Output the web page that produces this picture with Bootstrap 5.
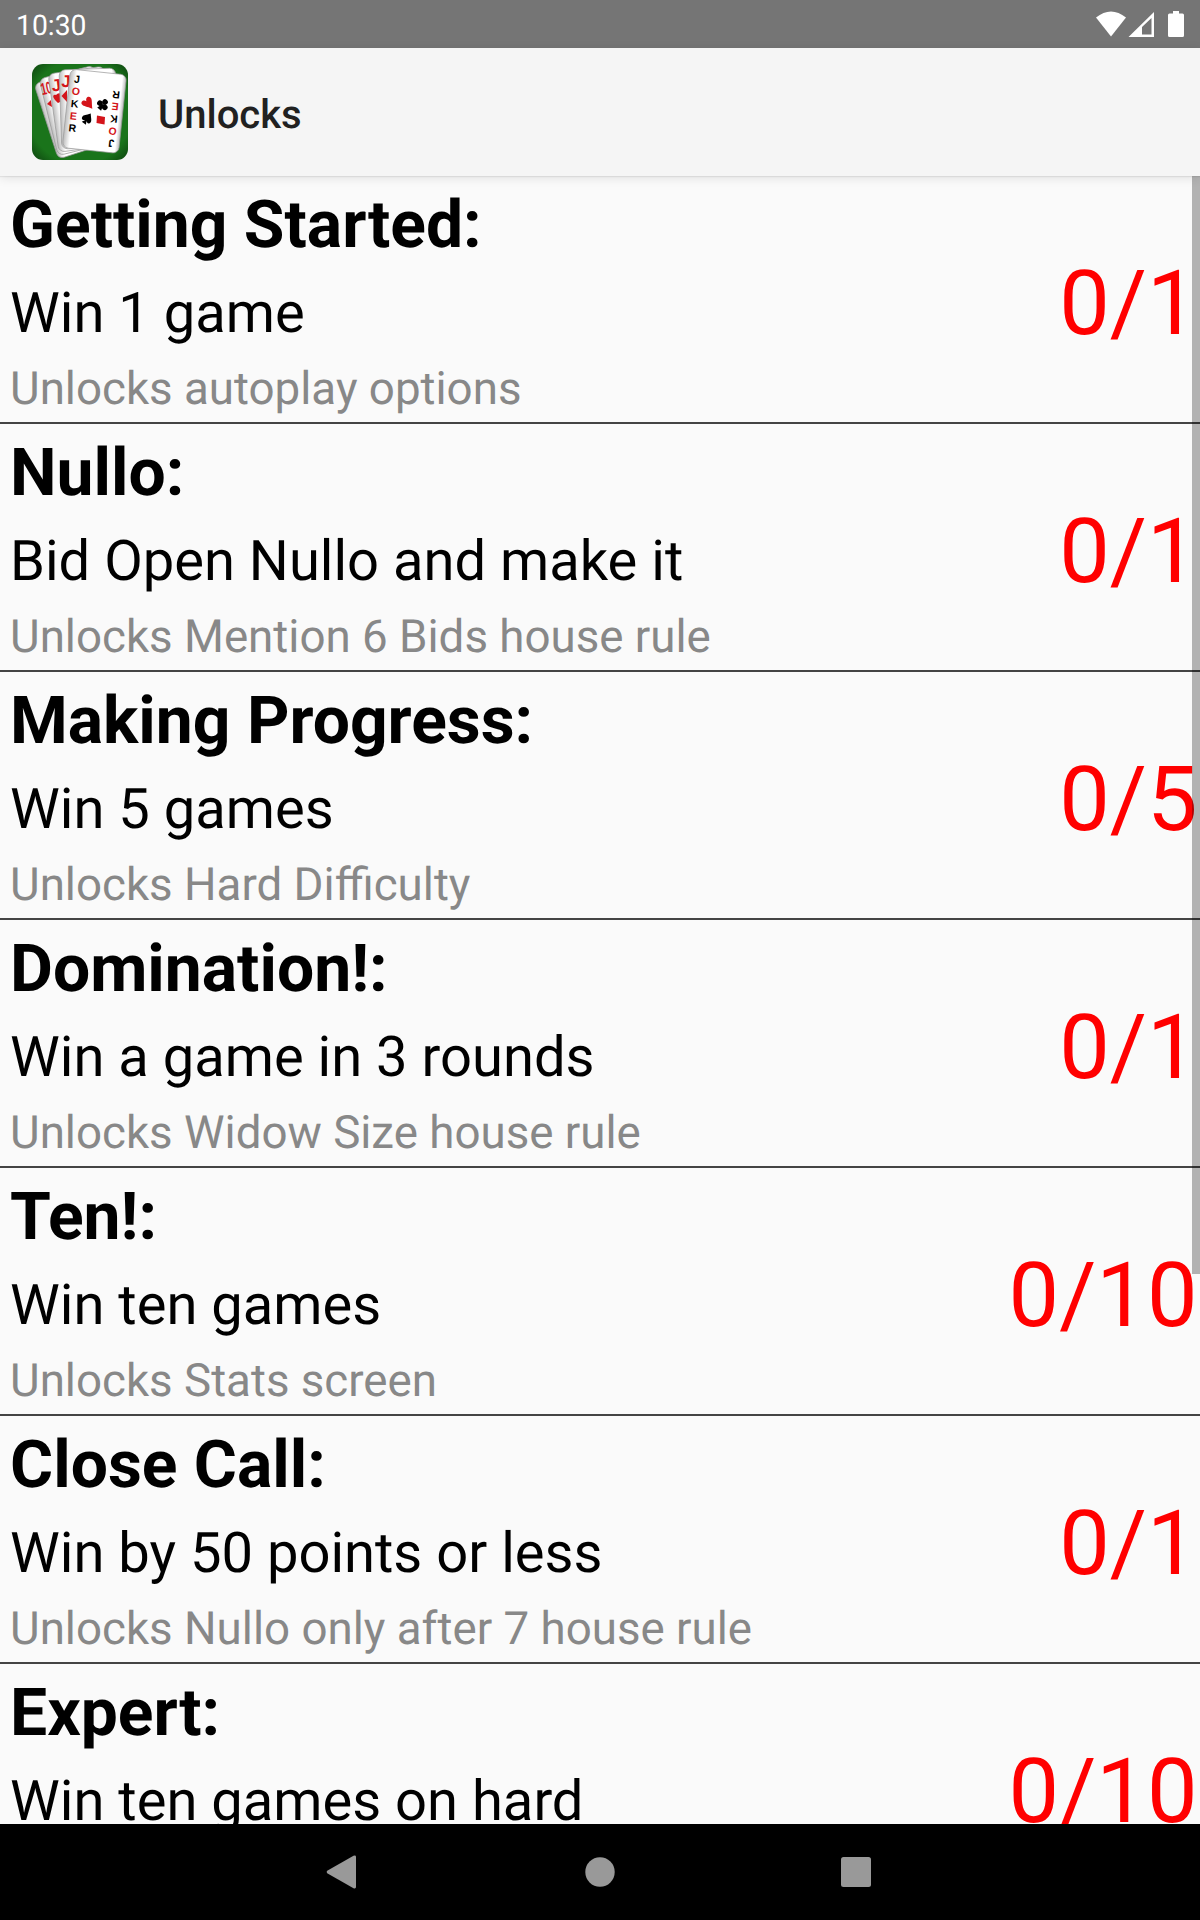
<!DOCTYPE html>
<html lang="en">
<head>
<meta charset="utf-8">
<title>Unlocks</title>
<link rel="stylesheet" href="https://cdn.jsdelivr.net/npm/bootstrap@5.3.0/dist/css/bootstrap.min.css">
<style>
body{font-family:Roboto,"Noto Sans",sans-serif;background:#fafafa;color:#000;text-rendering:geometricPrecision}
.screen{width:1200px;height:1920px}
.status-bar{height:48px;background:#757575;color:#fff;font-size:28.3px;line-height:48px;padding:2px 14px 0 16px}
.app-bar{height:128px;background:#f5f5f5;padding:0 32px;z-index:2;box-shadow:0 1px 1px rgba(0,0,0,.07),0 2px 10px rgba(0,0,0,.1)}
.app-title{font-size:40px;font-weight:500;line-height:48px;color:#212121;margin-left:30px;padding-top:5px}
.unlock-item{height:248px;flex:none;border-bottom:2px solid #444;padding:2px 2.5px 0 10px}
.unlock-name{font-size:66px;line-height:96px;font-weight:700}
.unlock-goal{font-size:56.1px;line-height:78px}
.unlock-reward{font-size:45.7px;line-height:72px;color:#888;padding-top:2px;margin-bottom:-4px}
.unlock-count{font-size:90px;line-height:106px;color:#f00;padding-top:73px}
.scroll-thumb{top:0;right:0;width:8px;height:1098px;background:rgba(0,0,0,.286)}
.nav-keys{height:96px;background:#000;z-index:2}
.nav-key{width:256px}
</style>
<script src="https://cdn.jsdelivr.net/npm/bootstrap@5.3.0/dist/js/bootstrap.bundle.min.js"></script>
</head>
<body>
<div class="screen d-flex flex-column overflow-hidden">
  <header class="status-bar d-flex justify-content-between flex-shrink-0">
    <span>10:30</span>
    <svg width="92" height="44" viewBox="1094 2 92 44" fill="#fff">
      <path d="M1096 17.500Q1111 5.500 1126 17.500L1111 36.500Z"/>
      <path fill-rule="evenodd" d="M1154 12V37H1128.500ZM1151.500 18L1142 27V34.500H1151.500Z"/>
      <path d="M1173 11h6v2.500h3.500q1.500 0 1.500 1.500v20.500q0 1.500-1.500 1.500h-13q-1.500 0-1.500-1.500V15q0-1.500 1.500-1.500h3.500z"/>
    </svg>
  </header>
  <div class="app-bar d-flex align-items-center flex-shrink-0 position-relative">
    <svg width="96" height="96" viewBox="0 0 96 96" font-family="Liberation Sans, sans-serif" font-weight="700" font-size="10.5" text-anchor="middle">
      <defs>
        <radialGradient id="felt" cx=".5" cy=".5" r=".72"><stop offset=".75" stop-color="#1a741b"/><stop offset="1" stop-color="#0c3f0e"/></radialGradient>
        <linearGradient id="edge"><stop offset="0" stop-color="#bbb"/><stop offset=".12" stop-color="#fff"/><stop offset=".93" stop-color="#fff"/><stop offset="1" stop-color="#bbb"/></linearGradient>
        <rect id="pc" width="56.500" height="79" rx="6" fill="url(#edge)" stroke="#999" stroke-width=".7"/>
      </defs>
      <rect width="96" height="96" rx="11" fill="url(#felt)"/>
      <use href="#pc" transform="translate(2 20) rotate(-18)"/>
      <use href="#pc" transform="translate(7 15) rotate(-14)"/>
      <text transform="translate(15.500 30) rotate(-13)" fill="#d4141a" font-size="17" textLength="11" lengthAdjust="spacingAndGlyphs">10</text>
      <path d="M15 40l4-4 1 7z" fill="#d4141a"/>
      <use href="#pc" transform="translate(16 10) rotate(-8)"/>
      <text transform="translate(25 27) rotate(-7)" fill="#d4141a" font-size="17">J</text>
      <path d="M26 39C20 34 20 30 24 31Q26 28 30 30V37Z" fill="#d4141a"/>
      <use href="#pc" transform="translate(27 6) rotate(-2)"/>
      <text transform="translate(34 23)" fill="#d4141a" font-size="17">J</text>
      <path d="M29.500 32L35 26V38Z" fill="#d4141a"/>
      <use href="#pc" transform="translate(38.500 5) rotate(6)"/>
      <g id="joker">
        <text transform="translate(44.700 18.800) rotate(6)">J</text>
        <text transform="translate(43.500 31) rotate(6)" fill="#d4141a">O</text>
        <text transform="translate(42.300 43.300) rotate(6)">K</text>
        <text transform="translate(41 55.600) rotate(6)" fill="#d4141a">E</text>
        <text transform="translate(40 67.600) rotate(6)">R</text>
      </g>
      <use href="#joker" transform="rotate(180 62.200 47.300)"/>
      <path transform="translate(56 39.200) rotate(-38)" fill="#d4141a" d="M0 7C-3 2-5.500 0-5.500-2.500C-5.500-6-1-6 0-2.500C1-6 5.500-6 5.500-2.500C5.500 0 3 2 0 7Z"/>
      <g transform="translate(71 40.500) rotate(40)"><circle cy="-3.200" r="2.800"/><circle cx="-3.200" cy="1" r="2.800"/><circle cx="3.200" cy="1" r="2.800"/><path d="M0-2L2.500 6H-2.500Z"/></g>
      <g transform="translate(55.300 54.300) rotate(35)"><path d="M0-6C3-2 5-1 5 1.500C5 4 2 4.500 .8 2.500L2.500 6H-2.500L-.8 2.500C-2 4.500-5 4-5 1.500C-5-1-3-2 0-6Z"/></g>
      <path d="M65 51.500L73 53L72.500 60.500L64.500 59Z" fill="#d4141a"/>
    </svg>
    <span class="app-title">Unlocks</span>
  </div>
  <main class="flex-grow-1 d-flex flex-column overflow-hidden position-relative">
    <section class="unlock-item d-flex justify-content-between align-items-start"><div><div class="unlock-name">Getting Started:</div><div class="unlock-goal">Win 1 game</div><div class="unlock-reward">Unlocks autoplay options</div></div><div class="unlock-count">0/1</div></section>
    <section class="unlock-item d-flex justify-content-between align-items-start"><div><div class="unlock-name">Nullo:</div><div class="unlock-goal">Bid Open Nullo and make it</div><div class="unlock-reward">Unlocks Mention 6 Bids house rule</div></div><div class="unlock-count">0/1</div></section>
    <section class="unlock-item d-flex justify-content-between align-items-start"><div><div class="unlock-name">Making Progress:</div><div class="unlock-goal">Win 5 games</div><div class="unlock-reward">Unlocks Hard Difficulty</div></div><div class="unlock-count">0/5</div></section>
    <section class="unlock-item d-flex justify-content-between align-items-start"><div><div class="unlock-name">Domination!:</div><div class="unlock-goal">Win a game in 3 rounds</div><div class="unlock-reward">Unlocks Widow Size house rule</div></div><div class="unlock-count">0/1</div></section>
    <section class="unlock-item d-flex justify-content-between align-items-start"><div><div class="unlock-name">Ten!:</div><div class="unlock-goal">Win ten games</div><div class="unlock-reward">Unlocks Stats screen</div></div><div class="unlock-count">0/10</div></section>
    <section class="unlock-item d-flex justify-content-between align-items-start"><div><div class="unlock-name">Close Call:</div><div class="unlock-goal">Win by 50 points or less</div><div class="unlock-reward">Unlocks Nullo only after 7 house rule</div></div><div class="unlock-count">0/1</div></section>
    <section class="unlock-item d-flex justify-content-between align-items-start"><div><div class="unlock-name">Expert:</div><div class="unlock-goal">Win ten games on hard</div></div><div class="unlock-count">0/10</div></section>
    <div class="scroll-thumb position-absolute"></div>
  </main>
  <nav class="nav-keys d-flex justify-content-center align-items-center flex-shrink-0">
    <div class="nav-key d-flex justify-content-center pe-1"><svg width="34" height="34" fill="#999"><path d="M2.200 15.700L28.500 .7Q31 0 31 2V32Q31 34 28.500 33.200L2.200 18.300Q1 17 2.200 15.700Z"/></svg></div>
    <div class="nav-key d-flex justify-content-center"><svg width="30" height="30" fill="#999"><circle cx="15" cy="15" r="14.700"/></svg></div>
    <div class="nav-key d-flex justify-content-center"><svg width="30" height="30" fill="#999"><rect width="30" height="30" rx="2.500"/></svg></div>
  </nav>
</div>
</body>
</html>
